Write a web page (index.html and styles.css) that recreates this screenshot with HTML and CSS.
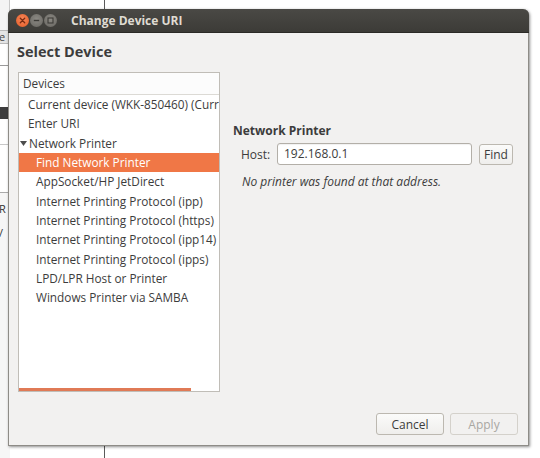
FILE: index.html
```html
<!DOCTYPE html>
<html>
<head>
<meta charset="utf-8">
<link rel="stylesheet" href="styles.css">
</head>
<body>
<div class="desktop">
  <div class="bg-vline top"></div>
  <div class="bg-vline bottom"></div>
  <div class="bg-strip">
    <div class="bg-top"></div>
    <div class="bg-field">e</div>
    <div class="bg-white1"></div>
    <div class="bg-white2"></div>
    <div class="bg-dark"></div>
    <div class="bg-white3"></div>
    <div class="bg-white4"></div>
    <div class="bg-letter">R</div>
    <div class="bg-letter">/</div>
  </div>
</div>

<div class="window">
  <div class="titlebar">
    <div class="wbtns">
      <span class="wbtn close"><svg width="13" height="13" viewBox="0 0 13 13"><path d="M4.3 4.3 L8.7 8.7 M8.7 4.3 L4.3 8.7" stroke="#7a2a10" stroke-width="1.3" stroke-linecap="round"/></svg></span>
      <span class="wbtn mini"><svg width="13" height="13" viewBox="0 0 13 13"><path d="M3.8 6.5 H9.2" stroke="#3c3b37" stroke-width="1.4"/></svg></span>
      <span class="wbtn maxi"><svg width="13" height="13" viewBox="0 0 13 13"><rect x="4" y="4" width="5" height="5" fill="none" stroke="#3c3b37" stroke-width="1.1"/></svg></span>
    </div>
    <div class="wtitle">Change Device URI</div>
  </div>
  <div class="wbody">
    <h1 class="heading">Select Device</h1>
    <div class="main">
      <div class="list">
        <div class="list-header">Devices</div>
        <div class="row lvl0">Current device (WKK-850460) (Current)</div>
        <div class="row lvl0">Enter URI</div>
        <div class="row lvl0 parent"><svg class="expander" width="9" height="9" viewBox="0 0 9 9"><polygon points="1,2 8,2 4.5,7" fill="#4c4c4c"/></svg>Network Printer</div>
        <div class="row lvl1 selected">Find Network Printer</div>
        <div class="row lvl1">AppSocket/HP JetDirect</div>
        <div class="row lvl1">Internet Printing Protocol (ipp)</div>
        <div class="row lvl1">Internet Printing Protocol (https)</div>
        <div class="row lvl1">Internet Printing Protocol (ipp14)</div>
        <div class="row lvl1">Internet Printing Protocol (ipps)</div>
        <div class="row lvl1">LPD/LPR Host or Printer</div>
        <div class="row lvl1">Windows Printer via SAMBA</div>
        <div class="hscroll"></div>
      </div>
      <div class="panel">
        <div class="panel-title">Network Printer</div>
        <div class="host-row">
          <span class="host-label">Host:</span>
          <div class="entry">192.168.0.1</div>
          <button class="btn find">Find</button>
        </div>
        <div class="note">No printer was found at that address.</div>
      </div>
    </div>
    <div class="actions">
      <button class="btn action">Cancel</button>
      <button class="btn action disabled">Apply</button>
    </div>
  </div>
</div>
</body>
</html>
```

FILE: styles.css
```css
html, body {
  margin: 0;
  padding: 0;
}
body {
  width: 540px;
  height: 458px;
  background: #ffffff;
  position: relative;
  overflow: hidden;
  font-family: "Open Sans", "Liberation Sans", sans-serif;
  color: #3c3c3c;
}

/* background desktop window fragments */
.desktop {
  position: absolute;
  inset: 0;
  background: #ffffff;
}
.bg-vline {
  position: absolute;
  left: 104px;
  width: 1px;
  background: #5a5a5a;
}
.bg-vline.top { top: 0; height: 12px; }
.bg-vline.bottom { top: 444px; height: 14px; }
.bg-strip {
  position: absolute;
  left: 0;
  top: 0;
  width: 10px;
  height: 458px;
  display: flex;
  flex-direction: column;
  background: #f6f6f6;
}
.bg-top { height: 30px; background: #f4f4f4; border-right: 1px solid #c9c9c9; }
.bg-field {
  height: 12px;
  background: #e4e4e4;
  border-top: 1px solid #b9b9b9;
  border-bottom: 1px solid #b9b9b9;
  font-size: 11px;
  line-height: 12px;
  text-indent: -1px;
  color: #444;
}
.bg-white1 { height: 21px; background: #fff; border-bottom: 1px solid #9a9a9a; }
.bg-white2 { height: 41px; background: #fff; }
.bg-dark { height: 12px; background: #3d3d3d; }
.bg-white3 { height: 25px; background: #fff; border-bottom: 1px solid #c8c8c8; }
.bg-white4 { height: 47px; background: #fff; border-bottom: 1px solid #aaa; }
.bg-letter {
  height: 16px;
  font-size: 11px;
  line-height: 16px;
  color: #333;
  text-indent: -1px;
  margin-top: 8px;
}

/* main dialog window */
.window {
  position: absolute;
  left: 8px;
  top: 9px;
  width: 519px;
  height: 436px;
  display: flex;
  flex-direction: column;
  border-radius: 6px 6px 0 0;
  border: 1px solid #8e8c87;
  border-top: none;
  box-shadow: 1px 1px 3px rgba(0,0,0,0.45);
  background: #f2f1f0;
}
.titlebar {
  height: 23px;
  flex: none;
  display: flex;
  align-items: center;
  background: linear-gradient(#4a4945, #3c3b37);
  border-radius: 6px 6px 0 0;
  border-bottom: 1px solid #2b2a27;
  margin: 0 -1px;
}
.wbtns {
  display: flex;
  gap: 1px;
  margin-left: 8px;
}
.wbtn {
  width: 13px;
  height: 13px;
  border-radius: 50%;
  display: block;
}
.wbtn svg { display: block; }
.wbtn.close {
  background: radial-gradient(circle at 50% 40%, #f7875a, #e45a24);
}
.wbtn.mini, .wbtn.maxi {
  background: radial-gradient(circle at 50% 40%, #8c8a84, #66645f);
}
.wtitle {
  margin-left: 14px;
  font-weight: bold;
  font-size: 12px;
  color: #dfdbd2;
}

.wbody {
  flex: 1;
  display: flex;
  flex-direction: column;
  padding: 0 10px 0 8px;
}
.heading {
  margin: 10px 0 0 0;
  font-size: 14.5px;
  line-height: 18px;
  font-weight: bold;
  color: #3c3c3c;
}
.main {
  display: flex;
  margin-top: 11px;
}
.list {
  position: relative;
  width: 200px;
  height: 318px;
  margin-left: 1px;
  background: #ffffff;
  border: 1px solid #c0bdb7;
  overflow: hidden;
  font-size: 11.8px;
}
.list-header {
  height: 21px;
  line-height: 21px;
  padding-left: 4px;
  border-bottom: 1px solid #dcdad5;
  color: #3c3c3c;
  background: #fcfcfc;
}
.row {
  height: 19.3px;
  line-height: 19px;
  white-space: nowrap;
  color: #3c3c3c;
  display: flex;
  align-items: center;
}
.row.lvl0 { padding-left: 9px; }
.row.parent { padding-left: 0; }
.expander { margin: 0 1px 0 0; flex: none; }
.row.lvl1 { padding-left: 17px; }
.row.selected {
  background: #f07746;
  color: #ffffff;
}
.hscroll {
  position: absolute;
  left: 0;
  bottom: 0;
  width: 172px;
  height: 3px;
  background: #e07a56;
}

.panel {
  margin-left: 13px;
  margin-top: 51px;
  font-size: 12px;
  display: flex;
  flex-direction: column;
}
.panel-title {
  font-weight: bold;
  height: 16px;
  line-height: 16px;
}
.host-row {
  display: flex;
  align-items: center;
  margin-top: 4px;
  padding-left: 8px;
}
.host-label { width: 36px; }
.entry {
  width: 187px;
  height: 20px;
  line-height: 20px;
  padding-left: 6px;
  border: 1px solid #b3afa8;
  border-radius: 3px;
  background: #ffffff;
  box-shadow: inset 0 1px 1px rgba(0,0,0,0.06);
}
.btn {
  font-family: "Open Sans", "Liberation Sans", sans-serif;
  font-size: 12px;
  color: #3c3c3c;
  border: 1px solid #bcb8b0;
  border-radius: 3px;
  background: linear-gradient(#fbfbfa, #efeeec);
  padding: 0;
  margin: 0;
}
.btn.find {
  width: 34px;
  height: 21px;
  margin-left: 7px;
}
.note {
  font-style: italic;
  margin-top: 9px;
  padding-left: 9px;
  line-height: 16px;
}

.actions {
  margin-top: auto;
  margin-bottom: 10px;
  display: flex;
  justify-content: flex-end;
  gap: 6px;
}
.btn.action {
  width: 68px;
  height: 22px;
}
.btn.action.disabled {
  color: #a9a7a2;
  border-color: #d4d1cb;
  background: #f2f1f0;
}
```
